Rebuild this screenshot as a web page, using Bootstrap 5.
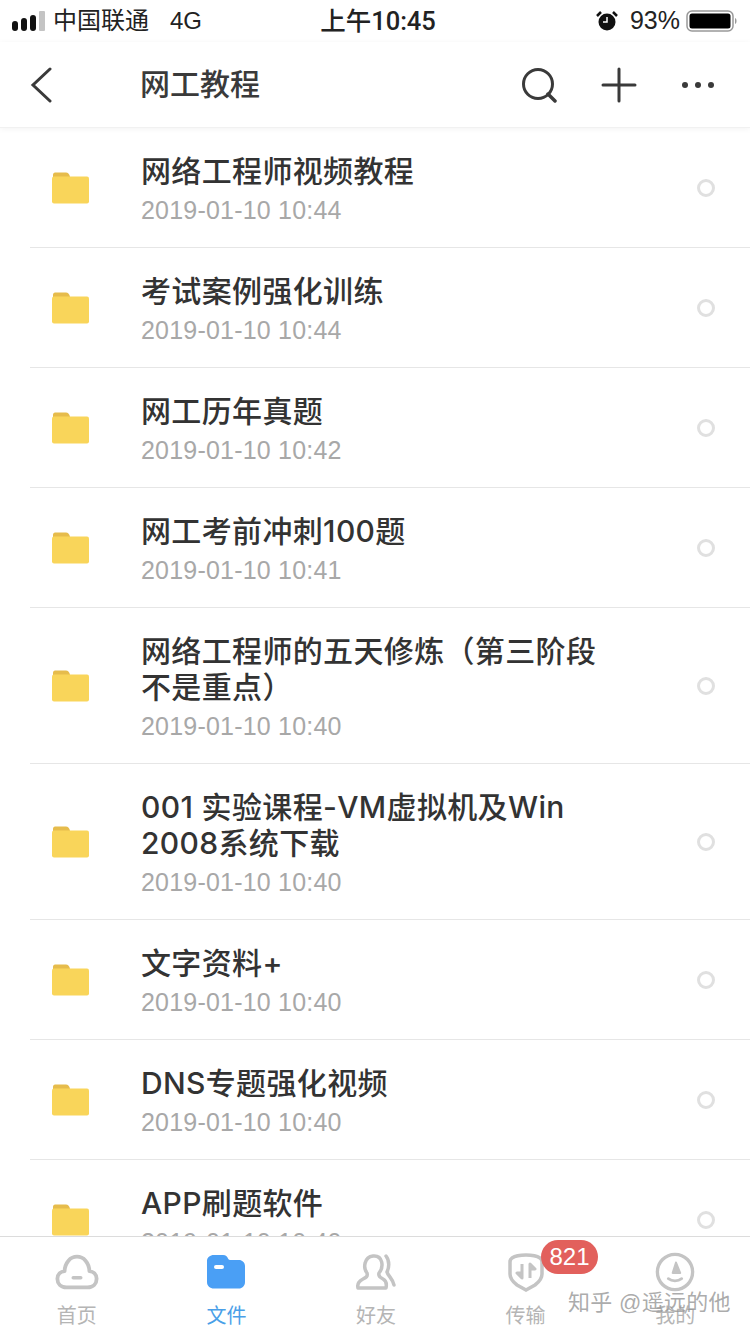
<!DOCTYPE html>
<html lang="zh-CN">
<head>
  <meta charset="UTF-8">
  <meta name="viewport" content="width=device-width, initial-scale=1.0">
  <title>网工教程</title>
  <link href="https://cdn.jsdelivr.net/npm/bootstrap@5.3.2/dist/css/bootstrap.min.css" rel="stylesheet">
  <style>
    html, body {
      height: 1334px;
      overflow: hidden;
    }
    body {
      position: relative;
      background-color: #fff;
      font-family: "Liberation Sans", "Noto Sans CJK SC", sans-serif;
      color: #333;
    }
    .status-bar {
      height: 42px;
      padding: 0 12px;
      font-size: 24px;
      color: #222;
    }
    .status-left, .status-right {
      flex: 1 1 0;
    }
    .status-time {
      font-family: Roboto, "Noto Sans CJK SC", sans-serif;
      font-size: 25.500px;
      font-weight: 500;
      margin-left: 6px;
    }
    .carrier {
      margin-left: 7px;
    }
    .net-type {
      margin-left: 21px;
    }
    .alarm-icon {
      margin-right: 12px;
    }
    .battery-pct {
      font-size: 25px;
    }
    .battery-icon {
      margin-left: 6px;
    }
    .head-bar {
      height: 86px;
      border-bottom: 1px solid #f1f1f1;
      box-shadow: 0 1px 6px rgba(0, 0, 0, .05);
    }
    .head-back {
      width: 140px;
      padding-left: 30px;
    }
    .head-title {
      font-size: 30px;
      font-weight: 500;
      color: #3a3a3a;
    }
    .head-actions {
      gap: 44px;
      padding-right: 35px;
    }
    .file-row {
      margin-left: 30px;
      padding: 25px 0 23px;
      border-bottom: 1px solid #e6e6e6;
    }
    .folder-cell {
      width: 111px;
      padding-left: 22px;
      margin-bottom: 1px;
    }
    .file-text {
      width: 470px;
    }
    .file-name {
      font-family: Inter, "Noto Sans CJK SC", sans-serif;
      font-size: 30px;
      line-height: 36px;
      letter-spacing: .35px;
      font-weight: 500;
      color: #333;
    }
    .file-date {
      font-size: 25px;
      line-height: 28px;
      letter-spacing: .2px;
      margin-top: 7px;
      color: #a8a8a8;
    }
    .pick-dot {
      width: 18px;
      height: 18px;
      margin-left: auto;
      margin-right: 35px;
      margin-bottom: 1px;
      border: 3px solid #e0e0e0;
      border-radius: 50%;
    }
    .tab-bar {
      position: absolute;
      left: 0;
      right: 0;
      bottom: 0;
      height: 98px;
      padding-left: 2px;
      background: #fff;
      border-top: 1px solid #dcdcdc;
    }
    .tab-cell {
      width: 150px;
      padding-top: 15px;
      font-size: 20px;
      line-height: 24px;
      color: #b5b5b5;
    }
    .tab-cell svg {
      display: block;
      height: 40px;
      margin-bottom: 12px;
    }
    .tab-on {
      color: #4a9fe8;
    }
    .count-pill {
      position: absolute;
      top: 3px;
      left: 541px;
      width: 57px;
      height: 34px;
      border-radius: 17px;
      background: #e2605c;
      color: #fff;
      font-size: 24px;
      line-height: 34px;
      text-align: center;
    }
    .watermark {
      position: absolute;
      top: 52px;
      left: 568px;
      font-size: 22px;
      line-height: 28px;
      letter-spacing: .3px;
      white-space: nowrap;
      color: rgba(150, 150, 150, .8);
    }
  </style>
</head>
<body>
  <!-- Status bar -->
  <div class="status-bar d-flex align-items-center">
    <div class="status-left d-flex align-items-center">
      <svg width="34" height="20" viewBox="0 0 34 20">
        <rect x="0" y="10" width="6" height="10" rx="3" fill="#111"/>
        <rect x="9" y="7" width="6" height="13" rx="3" fill="#111"/>
        <rect x="18" y="4" width="6" height="16" rx="3" fill="#111"/>
        <rect x="27" y="0" width="6" height="20" rx="1" fill="#c4c4c4"/>
      </svg>
      <span class="carrier">中国联通</span>
      <span class="net-type">4G</span>
    </div>
    <div class="status-time">上午10:45</div>
    <div class="status-right d-flex align-items-center justify-content-end">
      <svg width="22" height="22" viewBox="0 0 22 22" class="alarm-icon">
        <circle cx="11" cy="12" r="8.500" fill="#111"/>
        <path d="M11 7v5h-4" stroke="#fff" stroke-width="1.500" fill="none"/>
        <path d="M1 6l4-4M21 6l-4-4" stroke="#111" stroke-width="2.500"/>
      </svg>
      <span class="battery-pct">93%</span>
      <svg width="52" height="24" viewBox="0 0 52 24" class="battery-icon">
        <rect x="1" y="2" width="46" height="20" rx="5" fill="none" stroke="#999" stroke-width="1.500"/>
        <rect x="3.500" y="4.500" width="41" height="15" rx="2.500" fill="#000"/>
        <path d="M49 9c2 .5 2 5.500 0 6z" fill="#999"/>
      </svg>
    </div>
  </div>

  <!-- Title bar -->
  <div class="head-bar d-flex align-items-center">
    <div class="head-back">
      <svg width="22" height="36" viewBox="0 0 22 36" class="d-block">
        <path d="M20 2L3 18l17 16" fill="none" stroke="#3a3a3a" stroke-width="3" stroke-linecap="round"/>
      </svg>
    </div>
    <div class="head-title flex-grow-1">网工教程</div>
    <div class="head-actions d-flex align-items-center">
      <svg width="36" height="36" viewBox="0 0 36 36">
        <circle cx="17" cy="17" r="14.500" fill="none" stroke="#3a3a3a" stroke-width="3"/>
        <path d="M27 27l7 7" stroke="#3a3a3a" stroke-width="3.500" stroke-linecap="round"/>
      </svg>
      <svg width="36" height="36" viewBox="0 0 36 36">
        <path d="M18 2v32M2 18h32" stroke="#3a3a3a" stroke-width="3" stroke-linecap="round"/>
      </svg>
      <svg width="34" height="36" viewBox="0 0 34 36">
        <circle cx="4" cy="18" r="3" fill="#3a3a3a"/>
        <circle cx="17" cy="18" r="3" fill="#3a3a3a"/>
        <circle cx="30" cy="18" r="3" fill="#3a3a3a"/>
      </svg>
    </div>
  </div>

  <!-- File list -->
  <div id="file-list"></div>

  <!-- Tab bar -->
  <div class="tab-bar d-flex">
    <div class="tab-cell d-flex flex-column align-items-center">
      <svg width="44" height="40" viewBox="0 0 46 40">
        <path d="M12 36C6 36 2.500 32 2.500 27C2.500 22.500 6 19.500 10 19C10.500 10 16 4 23 4C30 4 35.500 10 36 19C40 19.500 43.500 22.500 43.500 27C43.500 32 40 36 34 36Z" fill="none" stroke="#c4c4c4" stroke-width="4" stroke-linejoin="round"/>
        <path d="M19 26h8" stroke="#c4c4c4" stroke-width="3.500" stroke-linecap="round"/>
      </svg>
      <span>首页</span>
    </div>
    <div class="tab-cell tab-on d-flex flex-column align-items-center">
      <svg width="38" height="40" viewBox="0 0 38 40">
        <path d="M7 3h9c3 0 4 1.500 5 3.500c.5 1 1.500 1.500 3 1.500h8c3 0 6 2.500 6 6v16c0 4-3 6.500-6 6.500H7c-4 0-7-2.500-7-6.500V9c0-3.500 3-6 7-6Z" fill="#4a9ff5"/>
        <rect x="7" y="13" width="10" height="4" rx="2" fill="#fff"/>
      </svg>
      <span>文件</span>
    </div>
    <div class="tab-cell d-flex flex-column align-items-center">
      <svg width="42" height="40" viewBox="0 0 42 40">
        <path d="M3 36c-1-4 1-7 5-9c3-1.500 5-2.500 4-6c-4-5-3-16 6-17c10-1 11 11 6 17c-1 3 1 4.500 4 6c3 1.500 4 4 3 9Z" fill="none" stroke="#c4c4c4" stroke-width="3.500" stroke-linejoin="round"/>
        <path d="M31 4c4 5 3 12 1 16c1 4 6 7 7 13" fill="none" stroke="#c4c4c4" stroke-width="3.500" stroke-linecap="round"/>
      </svg>
      <span>好友</span>
    </div>
    <div class="tab-cell d-flex flex-column align-items-center">
      <svg width="36" height="40" viewBox="0 0 36 40">
        <path d="M18 3C24 3 29 4 32 6c1.500 1 2 2 2 4v12c0 5-3 8-7 11l-9 5l-9-5c-4-3-7-6-7-11V10c0-2 .5-3 2-4C7 4 12 3 18 3Z" fill="none" stroke="#c4c4c4" stroke-width="3.500"/>
        <path d="M14 12v14l-5-5h5M22 26V12l5 5h-5" fill="#c4c4c4" stroke="#c4c4c4" stroke-width="3" stroke-linejoin="round"/>
      </svg>
      <span>传输</span>
    </div>
    <div class="tab-cell d-flex flex-column align-items-center">
      <svg width="42" height="42" viewBox="0 0 42 42">
        <circle cx="21" cy="21" r="18.500" fill="none" stroke="#c4c4c4" stroke-width="3.500"/>
        <path d="M22 11l-3.500 11h8z" fill="#c4c4c4" stroke="#c4c4c4" stroke-width="2" stroke-linejoin="round"/>
        <path d="M14 28c4 3 10 3 14 0" fill="none" stroke="#c4c4c4" stroke-width="3" stroke-linecap="round"/>
      </svg>
      <span>我的</span>
    </div>
    <div class="count-pill">821</div>
    <div class="watermark">知乎 @遥远的他</div>
  </div>

  <script>
    // Folders as they appear in the listing
    const files = [
      { name: '网络工程师视频教程', date: '2019-01-10 10:44' },
      { name: '考试案例强化训练', date: '2019-01-10 10:44' },
      { name: '网工历年真题', date: '2019-01-10 10:42' },
      { name: '网工考前冲刺100题', date: '2019-01-10 10:41' },
      { name: '网络工程师的五天修炼（第三阶段不是重点）', date: '2019-01-10 10:40' },
      { name: '001 实验课程-VM虚拟机及Win 2008系统下载', date: '2019-01-10 10:40' },
      { name: '文字资料+', date: '2019-01-10 10:40' },
      { name: 'DNS专题强化视频', date: '2019-01-10 10:40' },
      { name: 'APP刷题软件', date: '2019-01-10 10:40' }
    ];
    const folderIcon = '<svg width="37" height="32" viewBox="0 0 37 32" class="d-block">' +
      '<path d="M1 31V2.500C1 1.500 2 .5 3 .5h11c2 0 3 1.500 4 4z" fill="#e6bc4c"/>' +
      '<rect x="0" y="4.500" width="37" height="27" rx="2" fill="#f9d55a"/></svg>';
    const list = document.getElementById('file-list');
    files.forEach(function(file) {
      const row = document.createElement('div');
      row.className = 'file-row d-flex align-items-center';
      row.innerHTML =
        '<div class="folder-cell">' + folderIcon + '</div>' +
        '<div class="file-text">' +
          '<div class="file-name">' + file.name + '</div>' +
          '<div class="file-date">' + file.date + '</div>' +
        '</div>' +
        '<div class="pick-dot"></div>';
      list.appendChild(row);
    });
  </script>
  <script src="https://cdn.jsdelivr.net/npm/bootstrap@5.3.2/dist/js/bootstrap.bundle.min.js"></script>
</body>
</html>
